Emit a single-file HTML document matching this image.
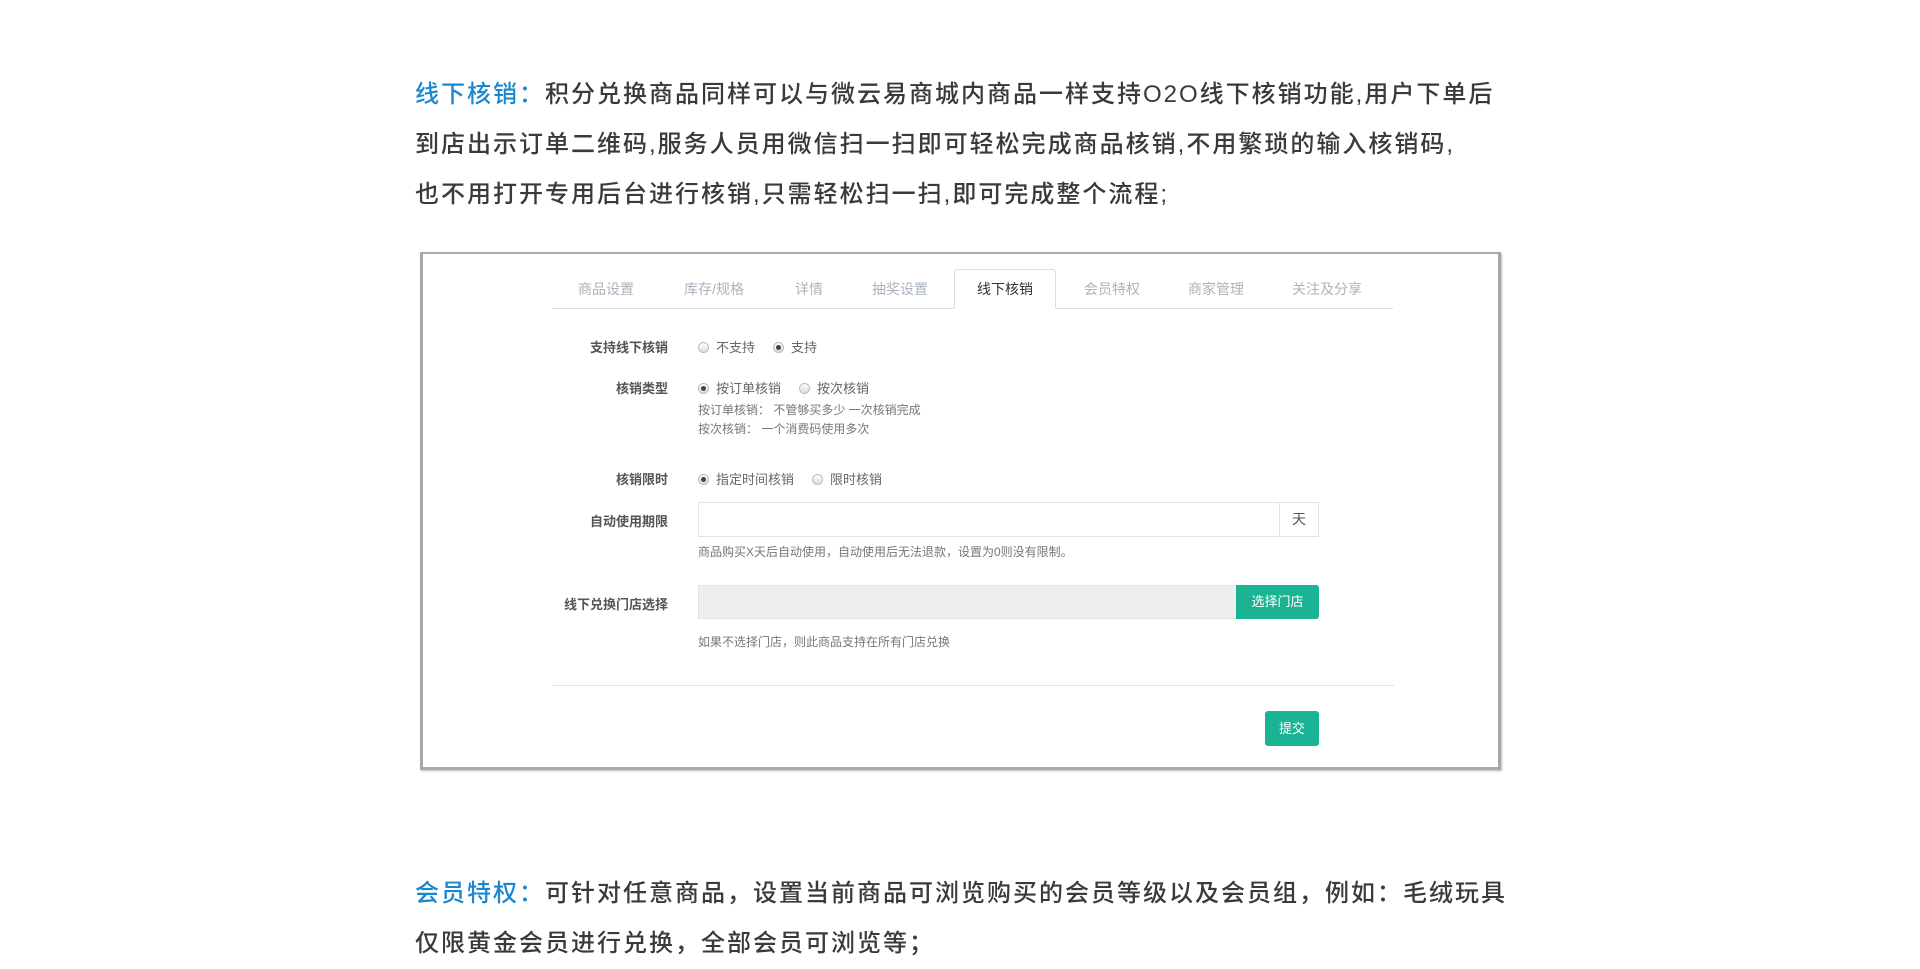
<!DOCTYPE html>
<html><head><meta charset="utf-8"><style>
*{margin:0;padding:0;box-sizing:border-box}
body{width:1920px;height:965px;background:#fff;position:relative;overflow:hidden;font-family:"Liberation Sans","Noto Sans CJK SC",sans-serif;color:#444}
.p{position:absolute;left:415px;font-size:24px;line-height:50px;width:1140px;color:#3a3a3a;white-space:nowrap;letter-spacing:2px;font-weight:500}
.b{color:#1a87d0}
.box{position:absolute;left:420px;top:252px;width:1081px;height:518px;border:3px solid #a8a8a8;border-top-width:2px;box-shadow:1px 1px 2px #bbb}
.a{position:absolute;font-size:13px;white-space:nowrap}
.tabs{position:absolute;left:552px;top:269px;width:841px;height:40px;border-bottom:1px solid #ddd}
.tab{position:absolute;top:0;height:40px;line-height:40px;font-size:14px;color:#aab3bd;transform:translateX(-50%);white-space:nowrap}
.act{position:absolute;left:402px;top:0;width:102px;height:40px;border:1px solid #ddd;border-bottom:1px solid #fff;border-radius:3px 3px 0 0;background:#fff}
.lbl{font-weight:bold;color:#555;text-align:right;width:200px}
.r{display:inline-block;width:11px;height:11px;border:1px solid #bbb;border-radius:50%;background:linear-gradient(#fff,#ddd);vertical-align:-1px;margin-right:7px;position:relative}
.r.on::after{content:"";position:absolute;left:2px;top:2px;width:5px;height:5px;border-radius:50%;background:#444}
.opt{color:#666;margin-right:18px}
.h{font-size:12px;color:#777}
.btn{position:absolute;background:#1ab394;color:#fff;font-size:13px;text-align:center;border-radius:3px}
</style></head><body>
<div class="p" style="top:70px"><span class="b">线下核销：</span>积分兑换商品同样可以与微云易商城内商品一样支持O2O线下核销功能,用户下单后<br>到店出示订单二维码,服务人员用微信扫一扫即可轻松完成商品核销,不用繁琐的输入核销码,<br>也不用打开专用后台进行核销,只需轻松扫一扫,即可完成整个流程;</div>

<div class="box"></div>
<div class="tabs">
<div class="act"></div>
<div class="tab" style="left:54px">商品设置</div>
<div class="tab" style="left:162px">库存/规格</div>
<div class="tab" style="left:257px">详情</div>
<div class="tab" style="left:348px">抽奖设置</div>
<div class="tab" style="left:453px;color:#333">线下核销</div>
<div class="tab" style="left:560px">会员特权</div>
<div class="tab" style="left:664px">商家管理</div>
<div class="tab" style="left:775px">关注及分享</div>
</div>

<div class="a lbl" style="left:468px;top:337px">支持线下核销</div>
<div class="a" style="left:698px;top:337px"><span class="r"></span><span class="opt">不支持</span><span class="r on"></span><span class="opt">支持</span></div>

<div class="a lbl" style="left:468px;top:378px">核销类型</div>
<div class="a" style="left:698px;top:378px"><span class="r on"></span><span class="opt">按订单核销</span><span class="r"></span><span class="opt">按次核销</span></div>
<div class="a h" style="left:698px;top:401px">按订单核销： 不管够买多少 一次核销完成</div>
<div class="a h" style="left:698px;top:420px">按次核销： 一个消费码使用多次</div>

<div class="a lbl" style="left:468px;top:469px">核销限时</div>
<div class="a" style="left:698px;top:469px"><span class="r on"></span><span class="opt">指定时间核销</span><span class="r"></span><span class="opt">限时核销</span></div>

<div class="a lbl" style="left:468px;top:511px">自动使用期限</div>
<div style="position:absolute;left:698px;top:502px;width:621px;height:35px;border:1px solid #e2e2e2"></div>
<div style="position:absolute;left:1279px;top:502px;width:40px;height:35px;border:1px solid #e2e2e2;font-size:14px;line-height:33px;text-align:center;color:#555">天</div>
<div class="a h" style="left:698px;top:543px">商品购买X天后自动使用，自动使用后无法退款，设置为0则没有限制。</div>

<div class="a lbl" style="left:468px;top:594px">线下兑换门店选择</div>
<div style="position:absolute;left:698px;top:585px;width:539px;height:34px;border:1px solid #e2e2e2;background:#eee"></div>
<div class="btn" style="left:1236px;top:585px;width:83px;height:34px;line-height:34px;border-radius:0 3px 3px 0">选择门店</div>
<div class="a h" style="left:698px;top:633px">如果不选择门店，则此商品支持在所有门店兑换</div>

<div style="position:absolute;left:552px;top:685px;width:841px;border-top:1px dotted #ccc"></div>
<div class="btn" style="left:1265px;top:711px;width:54px;height:35px;line-height:35px">提交</div>

<div class="p" style="top:869px"><span class="b">会员特权：</span>可针对任意商品，设置当前商品可浏览购买的会员等级以及会员组，例如：毛绒玩具<br>仅限黄金会员进行兑换，全部会员可浏览等；</div>
</body></html>
